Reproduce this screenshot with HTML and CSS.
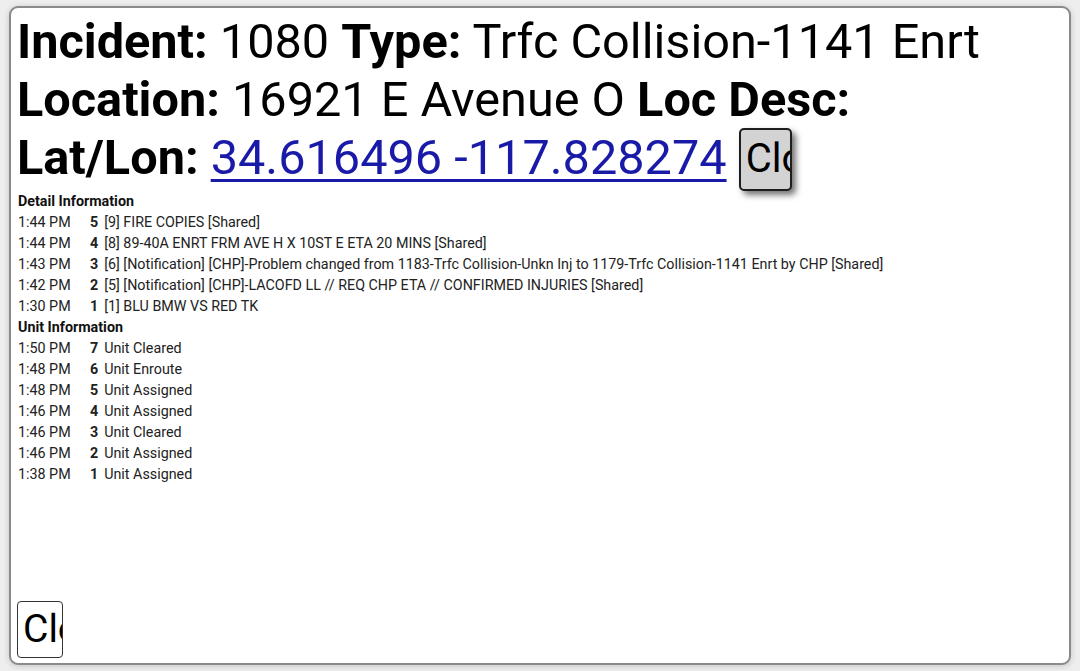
FILE: index.html
```html
<!DOCTYPE html>
<html>
<head>
<meta charset="utf-8">
<link rel="stylesheet" href="styles.css">
</head>
<body>
<div class="panel">
  <div class="head">
    <div class="hline"><b>Incident:</b> 1080 <b>Type:</b> Trfc Collision-1141 Enrt</div>
    <div class="hline"><b>Location:</b> 16921 E Avenue O <b>Loc Desc:</b></div>
    <div class="hline"><b>Lat/Lon:</b> <a class="link" href="#">34.616496 -117.828274</a> <button class="btn-top">Close</button></div>
  </div>
  <div class="section">
    <div class="sec-title">Detail Information</div>
    <div class="row"><span class="time">1:44 PM</span><b class="num">5</b><span class="txt">[9] FIRE COPIES [Shared]</span></div>
    <div class="row"><span class="time">1:44 PM</span><b class="num">4</b><span class="txt">[8] 89-40A ENRT FRM AVE H X 10ST E ETA 20 MINS [Shared]</span></div>
    <div class="row"><span class="time">1:43 PM</span><b class="num">3</b><span class="txt">[6] [Notification] [CHP]-Problem changed from 1183-Trfc Collision-Unkn Inj to 1179-Trfc Collision-1141 Enrt by CHP [Shared]</span></div>
    <div class="row"><span class="time">1:42 PM</span><b class="num">2</b><span class="txt">[5] [Notification] [CHP]-LACOFD LL // REQ CHP ETA // CONFIRMED INJURIES [Shared]</span></div>
    <div class="row"><span class="time">1:30 PM</span><b class="num">1</b><span class="txt">[1] BLU BMW VS RED TK</span></div>
    <div class="sec-title">Unit Information</div>
    <div class="row"><span class="time">1:50 PM</span><b class="num">7</b><span class="txt">Unit Cleared</span></div>
    <div class="row"><span class="time">1:48 PM</span><b class="num">6</b><span class="txt">Unit Enroute</span></div>
    <div class="row"><span class="time">1:48 PM</span><b class="num">5</b><span class="txt">Unit Assigned</span></div>
    <div class="row"><span class="time">1:46 PM</span><b class="num">4</b><span class="txt">Unit Assigned</span></div>
    <div class="row"><span class="time">1:46 PM</span><b class="num">3</b><span class="txt">Unit Cleared</span></div>
    <div class="row"><span class="time">1:46 PM</span><b class="num">2</b><span class="txt">Unit Assigned</span></div>
    <div class="row"><span class="time">1:38 PM</span><b class="num">1</b><span class="txt">Unit Assigned</span></div>
  </div>
  <button class="btn-bottom">Close</button>
</div>
</body>
</html>
```

FILE: styles.css
```css
html, body {
  margin: 0;
  height: 100%;
}
body {
  background: #eeeeee;
  padding: 6px 9px;
  box-sizing: border-box;
  font-family: Roboto, "Liberation Sans", sans-serif;
  color: #000;
}
.panel {
  height: 659px;
  box-sizing: border-box;
  background: #fff;
  border: 2px solid #8a8a8a;
  border-radius: 9px;
  box-shadow: 0 1px 6px rgba(0,0,0,0.18);
  padding: 5px 6px 5px 6px;
  display: flex;
  flex-direction: column;
  overflow: hidden;
}
.head {
  font-size: 48.65px;
  line-height: 57.5px;
  white-space: nowrap;
}
.hline b {
  font-weight: 700;
}
.link {
  color: #1a1aa8;
  text-decoration: underline;
  text-decoration-thickness: 3px;
  text-underline-offset: 5px;
}
.btn-top {
  vertical-align: middle;
  width: 53px;
  height: 63px;
  box-sizing: border-box;
  margin-left: 0;
  margin-bottom: 3px;
  padding: 0 0 3px 5px;
  background: #d3d3d3;
  border: 2px solid #1e1e1e;
  border-radius: 5px;
  box-shadow: 4px 4px 6px rgba(0,0,0,0.55);
  font-family: Roboto, "Liberation Sans", sans-serif;
  font-size: 40px;
  color: #000;
  text-align: left;
  overflow: hidden;
  white-space: nowrap;
}
.section {
  font-size: 14.3px;
  line-height: 21px;
  color: #222;
  margin-top: -3px;
}
.sec-title {
  font-weight: 700;
  color: #111;
  padding-left: 1px;
}
.row {
  display: flex;
  white-space: nowrap;
}
.time {
  width: 72px;
  flex: none;
  padding-left: 1px;
}
.num {
  font-weight: 700;
  margin-right: 6px;
}
.btn-bottom {
  margin-top: auto;
  align-self: flex-start;
  width: 46px;
  height: 57px;
  box-sizing: border-box;
  padding: 0 0 2px 5px;
  background: #fff;
  border: 1px solid #333;
  border-radius: 4px;
  font-family: Roboto, "Liberation Sans", sans-serif;
  font-size: 39px;
  color: #000;
  text-align: left;
  overflow: hidden;
  white-space: nowrap;
}
```
